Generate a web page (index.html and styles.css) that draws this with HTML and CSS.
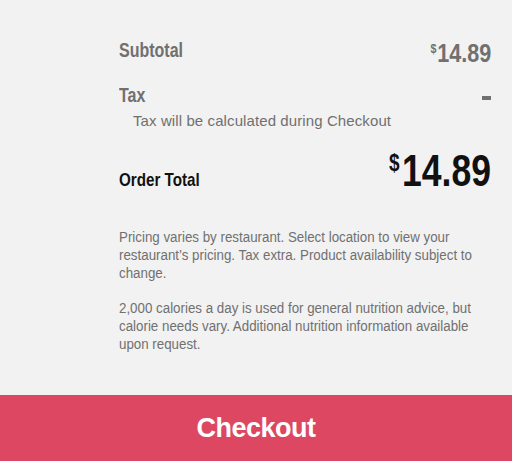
FILE: index.html
```html
<!DOCTYPE html>
<html>
<head>
<meta charset="utf-8">
<link rel="stylesheet" href="styles.css">
</head>
<body>
<div class="page">
  <div class="summary">
    <div class="row">
      <span class="label">Subtotal</span>
      <span class="price"><sup>$</sup>14.89</span>
    </div>
    <div class="row tax">
      <span class="label">Tax</span>
      <span class="dash"></span>
    </div>
    <div class="tax-note">Tax will be calculated during Checkout</div>
    <div class="row total">
      <span class="total-label">Order Total</span>
      <span class="total-price"><sup>$</sup>14.89</span>
    </div>
    <p class="note first">Pricing varies by restaurant. Select location to view your restaurant’s pricing. Tax extra. Product availability subject to change.</p>
    <p class="note second">2,000 calories a day is used for general nutrition advice, but calorie needs vary. Additional nutrition information available upon request.</p>
  </div>
  <button class="checkout">Checkout</button>
</div>
</body>
</html>
```
FILE: styles.css
```css
html, body {
  margin: 0;
  padding: 0;
  background: #ffffff;
}
.page {
  width: 512px;
  height: 461px;
  background: #f2f2f2;
  display: flex;
  flex-direction: column;
  justify-content: space-between;
  overflow: hidden;
}
.summary {
  padding: 38px 21px 0 119px;
  display: flex;
  flex-direction: column;
  font-family: "Liberation Sans", Arial, sans-serif;
  color: #707070;
}
.row {
  display: flex;
  justify-content: space-between;
  align-items: flex-start;
}
.label {
  display: inline-block;
  font-size: 20px;
  font-weight: bold;
  line-height: 24px;
  transform: scaleX(0.8);
  transform-origin: left center;
}
.price {
  display: inline-block;
  font-size: 26px;
  font-weight: bold;
  line-height: 30px;
  transform: scaleX(0.83);
  transform-origin: right center;
}
.price sup {
  font-size: 13px;
  line-height: 0;
  vertical-align: 9px;
  margin-right: 1px;
}
.tax {
  margin-top: 15px;
}
.dash {
  width: 9px;
  height: 4px;
  background: #707070;
  margin-top: 13px;
}
.tax-note {
  font-size: 15px;
  line-height: 18px;
  letter-spacing: 0.1px;
  margin: 5px 0 0 14px;
}
.total {
  margin-top: 18px;
  align-items: baseline;
  color: #111111;
}
.total-label {
  display: inline-block;
  font-size: 19px;
  font-weight: bold;
  line-height: 22px;
  transform: scaleX(0.8);
  transform-origin: left center;
}
.total-price {
  display: inline-block;
  font-size: 45px;
  font-weight: bold;
  line-height: 46px;
  transform: scaleX(0.79);
  transform-origin: right center;
}
.total-price sup {
  font-size: 24px;
  line-height: 0;
  vertical-align: 15px;
  margin-right: 3px;
}
.note {
  margin: 0;
  width: 432px;
  font-size: 15.5px;
  line-height: 18px;
  transform: scaleX(0.86);
  transform-origin: left top;
}
.note.first {
  margin-top: 34px;
}
.note.second {
  margin-top: 17px;
}
.checkout {
  flex: none;
  height: 66px;
  width: 512px;
  border: none;
  margin: 0;
  padding: 0;
  background: #dd4762;
  color: #ffffff;
  font-family: "Liberation Sans", Arial, sans-serif;
  font-weight: bold;
  font-size: 27px;
  letter-spacing: -0.5px;
}
```
